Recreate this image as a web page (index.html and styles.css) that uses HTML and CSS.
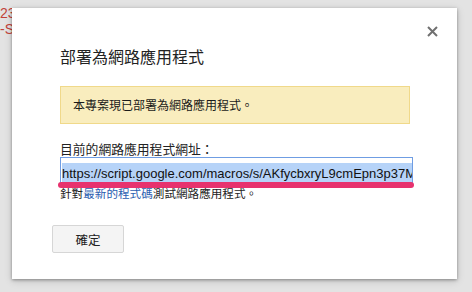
FILE: index.html
```html
<!DOCTYPE html>
<html lang="zh-Hant">
<head>
    <meta charset="UTF-8">
    <title>部署為網路應用程式</title>
    <link rel="stylesheet" href="styles.css">
</head>
<body>
    <div class="backdrop">
        <div class="code-line">23</div>
        <div class="code-line">-S</div>
    </div>

    <div class="dialog">
        <svg class="close" width="11" height="11" viewBox="0 0 11 11">
            <path d="M1 1 L10 10 M10 1 L1 10" stroke="#707070" stroke-width="2" fill="none"/>
        </svg>
        <h2 class="title">部署為網路應用程式</h2>
        <div class="notice">本專案現已部署為網路應用程式。</div>
        <label class="field-label">目前的網路應用程式網址：</label>
        <div class="url-box"><span class="url-text">https://script.google.com/macros/s/AKfycbxryL9cmEpn3p37MvXg</span></div>
        <div class="mark"></div>
        <p class="hint">針對<a href="#">最新的程式碼</a>測試網路應用程式。</p>
        <button class="ok">確定</button>
    </div>
</body>
</html>
```

FILE: styles.css
```css
body {
    margin: 0;
    width: 472px;
    height: 292px;
    overflow: hidden;
    background-color: #e3e3e3;
    font-family: "Noto Sans CJK TC", "Liberation Sans", sans-serif;
    position: relative;
}
.backdrop {
    padding-top: 5px;
    color: #c2423a;
    font-family: "Liberation Sans", sans-serif;
    font-size: 14px;
    line-height: 16px;
}
.dialog {
    position: absolute;
    left: 12px;
    top: 8px;
    width: 445px;
    height: 271px;
    box-sizing: border-box;
    background: #fff;
    box-shadow: 0 1px 3px rgba(0, 0, 0, 0.35), 0 2px 8px rgba(0, 0, 0, 0.15);
    padding: 38px 0 0 48px;
}
.close {
    position: absolute;
    left: 415px;
    top: 18px;
}
.title {
    margin: 0;
    font-size: 16px;
    font-weight: normal;
    color: #222;
    line-height: 20px;
}
.notice {
    margin-top: 20px;
    width: 350px;
    height: 38px;
    box-sizing: border-box;
    background-color: #f9edbe;
    border: 1px solid #f0d98a;
    padding: 0 12px;
    font-size: 12px;
    line-height: 36px;
    color: #1a1a1a;
}
.field-label {
    display: block;
    margin-top: 17px;
    font-size: 12.8px;
    line-height: 16px;
    color: #222;
}
.url-box {
    width: 353px;
    height: 26px;
    box-sizing: border-box;
    border: 1px solid #6f9de3;
    padding: 1px 0 0 1px;
    overflow: hidden;
    white-space: nowrap;
    background: #fff;
}
.url-text {
    display: inline-block;
    background-color: #b6d3f8;
    font-family: "Liberation Sans", sans-serif;
    font-size: 13px;
    line-height: 22px;
    color: #111;
}
.mark {
    width: 356px;
    height: 6px;
    margin: -1px 0 0 -2px;
    border-radius: 3px;
    background-color: #e7326e;
}
.hint {
    margin: -2px 0 0 0;
    font-size: 11.6px;
    line-height: 14px;
    color: #222;
}
.hint a {
    color: #2a5db0;
    text-decoration: none;
}
.ok {
    display: block;
    margin: 25px 0 0 -8px;
    width: 72px;
    height: 28px;
    background-color: #f4f4f4;
    border: 1px solid #d6d6d6;
    border-radius: 2px;
    font-family: "Noto Sans CJK TC", sans-serif;
    font-size: 12.5px;
    color: #222;
}
```
